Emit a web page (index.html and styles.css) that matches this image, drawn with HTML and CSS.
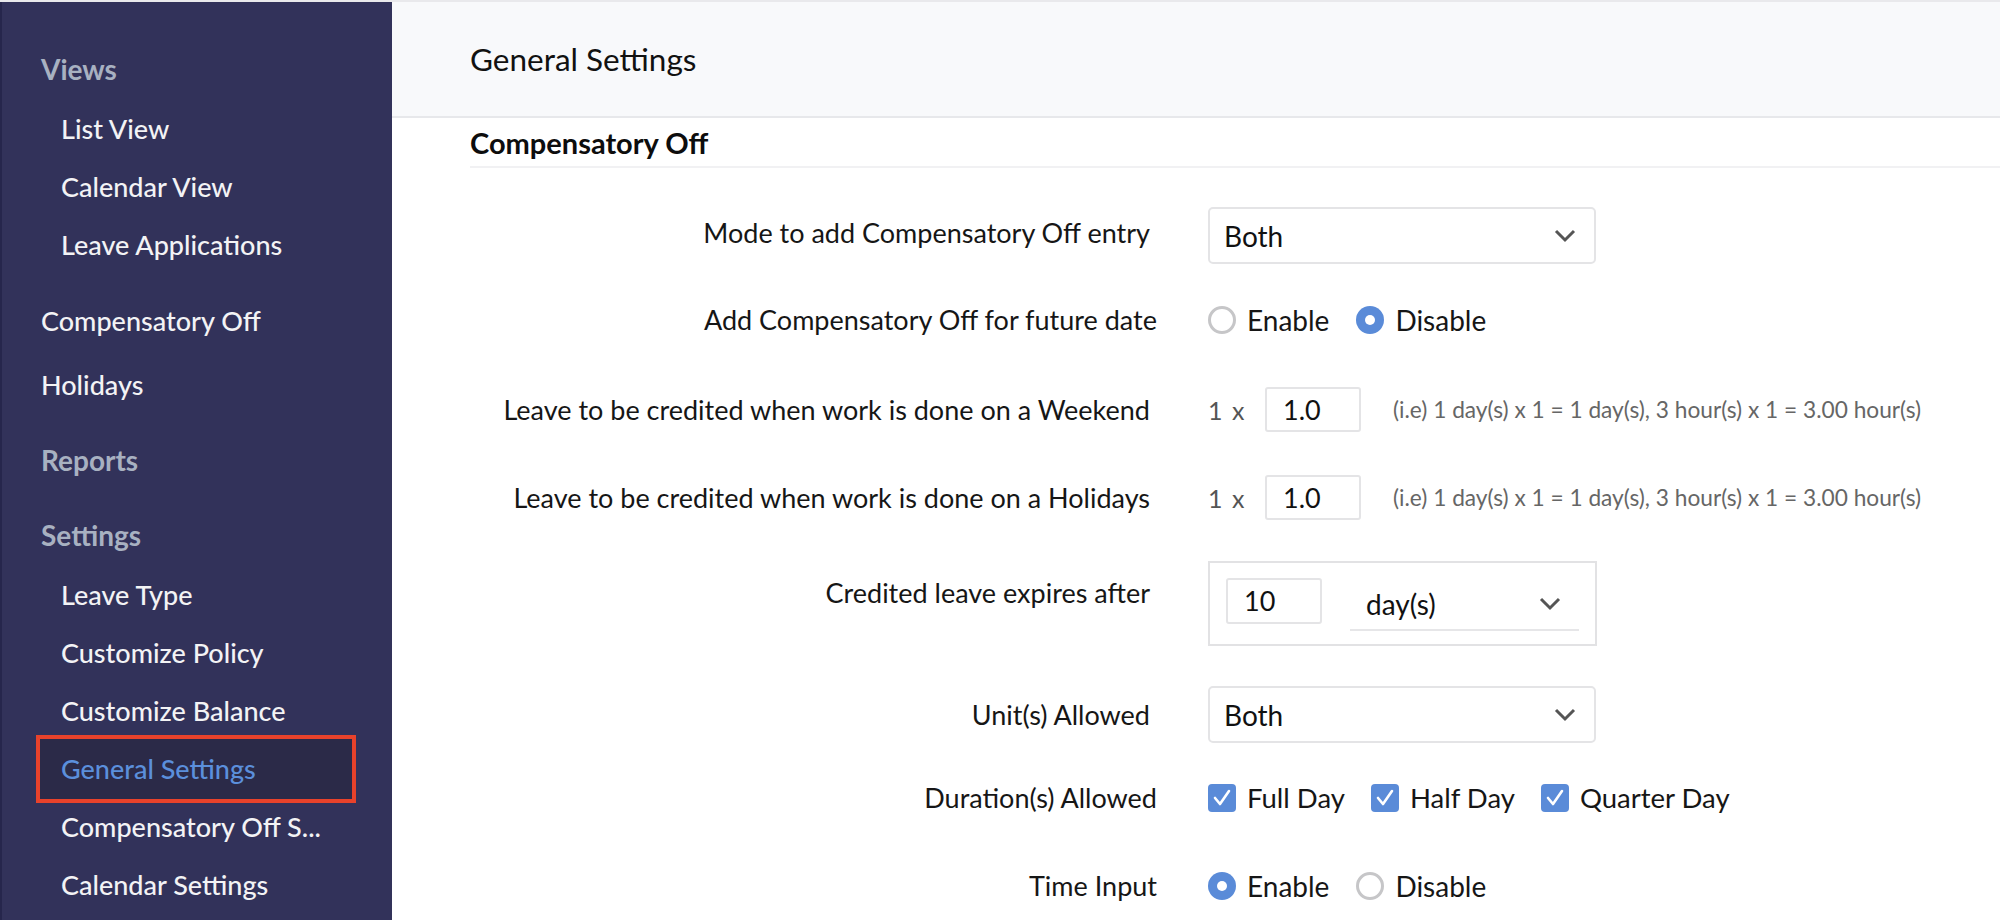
FILE: index.html
```html
<!DOCTYPE html>
<html lang="en">
<head>
<meta charset="utf-8">
<title>General Settings</title>
<link rel="stylesheet" href="styles.css">
</head>
<body>
<div class="app">
  <aside class="sidebar">
    <div class="group">
      <div class="nav-head">Views</div>
      <a class="nav-sub">List View</a>
      <a class="nav-sub">Calendar View</a>
      <a class="nav-sub">Leave Applications</a>
    </div>
    <div class="group group-b">
      <a class="nav-top">Compensatory Off</a>
      <a class="nav-top">Holidays</a>
    </div>
    <div class="group group-c">
      <div class="nav-head">Reports</div>
    </div>
    <div class="group group-d">
      <div class="nav-head">Settings</div>
      <a class="nav-sub">Leave Type</a>
      <a class="nav-sub">Customize Policy</a>
      <a class="nav-sub">Customize Balance</a>
      <a class="nav-sub active">General Settings</a>
      <a class="nav-sub">Compensatory Off S...</a>
      <a class="nav-sub">Calendar Settings</a>
    </div>
  </aside>

  <main class="main">
    <header class="page-head">
      <h1 class="page-title">General Settings</h1>
    </header>

    <section class="section">
      <h2 class="section-title">Compensatory Off</h2>

      <div class="form">
        <div class="row row-first">
          <div class="label label-up">Mode to add Compensatory Off entry</div>
          <div class="control">
            <div class="select"><span>Both</span><svg class="chev" viewBox="0 0 22 14"><path d="M2 2 L11 11 L20 2" fill="none" stroke="#555" stroke-width="3"/></svg></div>
          </div>
        </div>

        <div class="row">
          <div class="label label-shift">Add Compensatory Off for future date</div>
          <div class="control options">
            <span class="opt"><span class="radio"></span>Enable</span>
            <span class="opt"><span class="radio on"></span>Disable</span>
          </div>
        </div>

        <div class="row row-gap-a">
          <div class="label">Leave to be credited when work is done on a Weekend</div>
          <div class="control mult">
            <span class="mult-n">1</span><span class="mult-x">x</span>
            <div class="num">1.0</div>
            <span class="hint">(i.e) 1 day(s) x 1 = 1 day(s), 3 hour(s) x 1 = 3.00 hour(s)</span>
          </div>
        </div>

        <div class="row row-gap-b">
          <div class="label">Leave to be credited when work is done on a Holidays</div>
          <div class="control mult">
            <span class="mult-n">1</span><span class="mult-x">x</span>
            <div class="num">1.0</div>
            <span class="hint">(i.e) 1 day(s) x 1 = 1 day(s), 3 hour(s) x 1 = 3.00 hour(s)</span>
          </div>
        </div>

        <div class="row row-top">
          <div class="label label-top">Credited leave expires after</div>
          <div class="control">
            <div class="expire">
              <div class="num num-tall">10</div>
              <div class="line-select"><span>day(s)</span><svg class="chev" viewBox="0 0 22 14"><path d="M2 2 L11 11 L20 2" fill="none" stroke="#555" stroke-width="3"/></svg></div>
            </div>
          </div>
        </div>

        <div class="row">
          <div class="label">Unit(s) Allowed</div>
          <div class="control">
            <div class="select"><span>Both</span><svg class="chev" viewBox="0 0 22 14"><path d="M2 2 L11 11 L20 2" fill="none" stroke="#555" stroke-width="3"/></svg></div>
          </div>
        </div>

        <div class="row row-gap-d">
          <div class="label label-shift">Duration(s) Allowed</div>
          <div class="control options checks">
            <span class="opt"><span class="check"><svg viewBox="0 0 28 28"><path d="M7 14 L12 20 L21 7" fill="none" stroke="#fff" stroke-width="2.6" stroke-linecap="round" stroke-linejoin="round"/></svg></span>Full Day</span>
            <span class="opt"><span class="check"><svg viewBox="0 0 28 28"><path d="M7 14 L12 20 L21 7" fill="none" stroke="#fff" stroke-width="2.6" stroke-linecap="round" stroke-linejoin="round"/></svg></span>Half Day</span>
            <span class="opt"><span class="check"><svg viewBox="0 0 28 28"><path d="M7 14 L12 20 L21 7" fill="none" stroke="#fff" stroke-width="2.6" stroke-linecap="round" stroke-linejoin="round"/></svg></span>Quarter Day</span>
          </div>
        </div>

        <div class="row row-gap-c">
          <div class="label label-shift">Time Input</div>
          <div class="control options">
            <span class="opt"><span class="radio on"></span>Enable</span>
            <span class="opt"><span class="radio"></span>Disable</span>
          </div>
        </div>
      </div>
    </section>
  </main>
</div>
</body>
</html>
```

FILE: styles.css
```css
* { box-sizing: border-box; }

html, body {
  margin: 0;
  padding: 0;
}

body {
  width: 2000px;
  height: 920px;
  overflow: hidden;
  border-top: 2px solid #e9e9ec;
  font-family: "Lato", "Liberation Sans", sans-serif;
  color: #161616;
  background: #ffffff;
}

.app {
  display: flex;
  height: 918px;
}

/* Sidebar */
.sidebar {
  width: 392px;
  flex: none;
  background: #32325a;
  border-left: 2px solid #26264c;
  padding-top: 36px;
}

.group { display: flex; flex-direction: column; }
.group-b { margin-top: 15px; }
.group-c { margin-top: 12px; }
.group-d { margin-top: 13px; }

.nav-head {
  height: 62px;
  line-height: 62px;
  padding-left: 39px;
  font-size: 28px;
  font-weight: 700;
  color: #a8b1c1;
}

.nav-top {
  height: 64px;
  line-height: 64px;
  padding-left: 39px;
  font-size: 27px;
  font-weight: 500;
  color: #f3f3f5;
}

.nav-sub {
  position: relative;
  z-index: 0;
  height: 58px;
  line-height: 58px;
  padding-left: 59px;
  font-size: 27px;
  font-weight: 500;
  color: #f3f3f5;
}

.nav-sub.active { color: #5b8fdc; }

.nav-sub.active::before {
  content: "";
  position: absolute;
  left: 34px;
  right: 36px;
  top: -5px;
  bottom: -5px;
  border: 4px solid #e8422b;
  background: #2b2a48;
  z-index: -1;
}

/* Main */
.main {
  flex: 1;
  min-width: 0;
  background: #ffffff;
}

.page-head {
  height: 116px;
  background: #f8f9fb;
  border-bottom: 2px solid #e7e8eb;
  display: flex;
  align-items: center;
  padding-left: 78px;
}

.page-title {
  margin: 0;
  font-size: 31.5px;
  font-weight: 400;
  color: #111;
}

.section {
  padding-left: 78px;
}

.section-title {
  margin: 10px 0 0;
  font-size: 29px;
  line-height: 30px;
  font-weight: 700;
  color: #0d0d0d;
  padding-bottom: 8px;
  border-bottom: 2px solid #f1f1f3;
}

.form { display: flex; flex-direction: column; }

.row {
  display: grid;
  grid-template-columns: 680px auto;
  column-gap: 58px;
  align-items: center;
  margin-top: 40px;
}

.row-first { margin-top: 39px; }
.row-gap-a { margin-top: 51px; }
.row-gap-b { margin-top: 43px; }
.row-gap-c { margin-top: 56px; }
.row-gap-d { margin-top: 39px; }
.row-top { align-items: start; margin-top: 41px; }

.label {
  text-align: right;
  font-size: 27px;
  line-height: 32px;
  color: #161616;
}

.label-up { margin-top: -6px; }
.label-shift { margin-right: -7px; }
.label-top { padding-top: 16px; }

.control {
  display: flex;
  align-items: center;
  font-size: 28px;
}

.select {
  width: 388px;
  height: 57px;
  border: 2px solid #e4e4e6;
  border-radius: 5px;
  display: flex;
  align-items: center;
  justify-content: space-between;
  padding: 0 18px 0 14px;
  color: #111;
}

.chev { width: 22px; height: 14px; }

.options { gap: 27px; height: 32px; }
.checks { font-size: 27.5px; gap: 26px; }

.opt {
  display: inline-flex;
  align-items: center;
  gap: 11px;
  line-height: 32px;
}

.radio {
  width: 28px;
  height: 28px;
  border-radius: 50%;
  border: 3px solid #c6c6c8;
  background: #fff;
  position: relative;
}

.radio.on {
  border: none;
  background: #5a8bd8;
}

.radio.on::after {
  content: "";
  position: absolute;
  left: 9px;
  top: 9px;
  width: 10px;
  height: 10px;
  border-radius: 50%;
  background: #fff;
}

.check {
  width: 28px;
  height: 28px;
  border-radius: 4px;
  background: #5a8bd8;
  display: inline-flex;
}

.check svg { width: 28px; height: 28px; }

.mult { height: 45px; }

.mult-n { color: #555; font-size: 25px; width: 24px; }
.mult-x { color: #555; font-size: 25px; width: 33px; }

.num {
  width: 96px;
  height: 45px;
  border: 2px solid #e4e4e6;
  border-radius: 3px;
  padding-left: 16px;
  line-height: 41px;
  color: #111;
  font-size: 27px;
}

.hint {
  margin-left: 32px;
  font-size: 22.7px;
  color: #666;
}

.expire {
  width: 389px;
  height: 85px;
  border: 2px solid #e2e2e4;
  padding: 15px 16px;
  display: flex;
  align-items: flex-start;
}

.num-tall { height: 46px; line-height: 42px; }

.line-select {
  margin-left: 28px;
  width: 229px;
  height: 53px;
  border-bottom: 2px solid #e6e6e8;
  display: flex;
  align-items: center;
  justify-content: space-between;
  padding: 0 18px 0 16px;
  color: #111;
}
```
